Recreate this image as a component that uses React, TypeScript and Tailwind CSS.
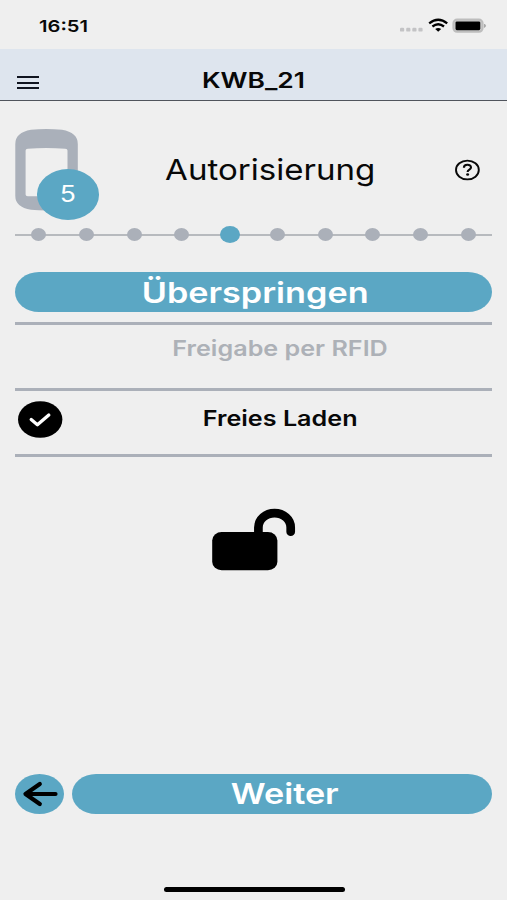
import React from 'react';

const STEPS = 10;
const CURRENT_STEP = 5;

const StatusBar: React.FC = () => (
  <div className="flex h-[49px] items-center justify-between pt-[3px] pl-[39px] pr-[20px]">
    <span className="origin-left scale-x-122 text-[16.5px] font-semibold leading-none">16:51</span>
    <svg width="88" height="16" viewBox="0 0 88 16">
      <g fill="#c3c3c5">
        <rect x="1" y="9.8" width="4.2" height="3.8" rx="1.2" />
        <rect x="7.2" y="9.8" width="4.2" height="3.8" rx="1.2" />
        <rect x="13.3" y="9.8" width="4.2" height="3.8" rx="1.2" />
        <rect x="19.4" y="9.8" width="4.2" height="3.8" rx="1.2" />
      </g>
      <g fill="none" stroke="#000" strokeWidth="2.3">
        <path d="M30.2 5.4 Q39.2 -2 48.2 5.4" />
        <path d="M33.4 8.5 Q39.2 4 45 8.5" />
      </g>
      <path d="M36.2 11.1 Q39.2 8.9 42.2 11.1 L39.2 13.7 Z" fill="#000" />
      <rect x="54.5" y="1.7" width="29" height="12" rx="3.6" fill="#d2d2d2" stroke="#bdbdbd" strokeWidth="2.2" />
      <rect x="56.5" y="3.4" width="24.8" height="8.8" rx="1.4" fill="#000" />
      <path d="M85.6 6.2 Q87.4 7.8 85.6 9.4 Z" fill="#a5a5a5" stroke="#a5a5a5" />
    </svg>
  </div>
);

const Header: React.FC = () => (
  <header className="relative flex h-[52px] items-center justify-center border-b border-[#50545c] bg-[#dee5ee] pt-[13px]">
    <button type="button" aria-label="Menü" className="absolute top-[27px] left-[17px] flex w-[22px] flex-col gap-[3.5px]">
      <span className="h-[2px] bg-[#10141f]" />
      <span className="h-[2px] bg-[#10141f]" />
      <span className="h-[2px] bg-[#10141f]" />
    </button>
    <h1 className="scale-x-124 text-[21.3px] font-semibold leading-none">KWB_21</h1>
  </header>
);

const StepBadge: React.FC = () => (
  <div className="relative h-[91px] w-[84px]">
    <svg width="63" height="82" viewBox="0 0 63 82">
      <path
        fillRule="evenodd"
        fill="#aab0ba"
        d="M16 0.8 Q31 -0.6 47 0.8 Q62.8 3.5 62.8 15 V67 Q62.8 78 47 80.8 Q31 82.2 16 80.8 Q0.3 78 0.3 67 V15 Q0.3 3.5 16 0.8 Z M12.8 19.8 Q10.6 20 10.6 21.6 V65.4 Q10.6 67.2 12.8 67.2 H50.3 Q52.5 67.2 52.5 65.4 V21.6 Q52.5 20 50.3 19.8 Q31 18.4 12.8 19.8 Z"
      />
    </svg>
    <div className="absolute top-[40px] left-[21.5px] flex h-[51px] w-[62.5px] items-center justify-center rounded-[50%] bg-[#5ba7c4]">
      <span className="scale-x-118 text-[22.5px] leading-none text-white">{CURRENT_STEP}</span>
    </div>
  </div>
);

const Progress: React.FC = () => (
  <div className="relative mt-[6px] flex h-[18px] items-center">
    <div className="absolute inset-x-0 top-[8px] h-[2.5px] bg-[#b7babe]" />
    <div className="relative flex w-full">
      {Array.from({ length: STEPS }, (_, i) => (
        <div key={i} className="flex flex-1 items-center justify-center">
          <span
            className={
              i + 1 === CURRENT_STEP
                ? 'h-[17px] w-[20px] rounded-[50%] bg-[#5ba7c4]'
                : 'h-[13px] w-[15px] rounded-[50%] bg-[#abb0b9]'
            }
          />
        </div>
      ))}
    </div>
  </div>
);

const App: React.FC = () => {
  return (
    <div className="flex h-[900px] w-full flex-col overflow-hidden bg-[#efefef] font-['Inter',sans-serif] text-[#080808]">
      <StatusBar />
      <Header />

      <main className="flex flex-1 flex-col px-[15px] pt-[27.5px]">
        <div className="flex">
          <StepBadge />
          <div className="flex h-[82px] flex-1 items-center justify-center">
            <h2 className="scale-x-114 text-[29px] leading-none whitespace-nowrap">Autorisierung</h2>
          </div>
          <div className="flex h-[82px] w-[50px] items-center justify-center">
            <svg width="26" height="22" viewBox="0 0 26 22" fill="none" stroke="#080808">
              <ellipse cx="13.4" cy="11" rx="11.4" ry="9.4" strokeWidth="1.9" />
              <path d="M9.9 8.7 C9.9 4.9 17 4.9 17 8.5 C17 10.7 13.6 10.5 13.6 12.9" strokeWidth="2.1" />
              <ellipse cx="13.6" cy="15.5" rx="1.5" ry="1.2" fill="#080808" stroke="none" />
            </svg>
          </div>
        </div>

        <Progress />

        <button type="button" className="mt-[28px] flex h-[40px] shrink-0 items-center justify-center rounded-[24px/20px] bg-[#5ba7c4] pt-px pl-[4px]">
          <span className="scale-x-118 text-[29px] font-semibold leading-none text-white">Überspringen</span>
        </button>

        <div className="mt-[10px] border-t-3 border-[#abb0b9]">
          <div className="flex h-[63px] pl-[54px]">
            <div className="flex h-[49px] flex-1 items-center justify-center">
              <span className="scale-x-117 text-[21.5px] font-semibold leading-none text-[#adb1b7]">Freigabe per RFID</span>
            </div>
          </div>
          <div className="flex h-[69px] border-y-3 border-[#abb0b9]">
            <div className="flex h-[57px] w-[54px] items-center pl-[3px]">
              <svg width="45" height="37" viewBox="0 0 45 37">
                <ellipse cx="22.2" cy="18.5" rx="22.2" ry="18.3" fill="#000" />
                <path d="M13.2 18.6 L19.4 23.8 L30.8 14" fill="none" stroke="#fff" strokeWidth="3.3" strokeLinecap="round" strokeLinejoin="round" />
              </svg>
            </div>
            <div className="flex h-[57px] flex-1 items-center justify-center">
              <span className="scale-x-117 text-[21.5px] font-semibold leading-none">Freies Laden</span>
            </div>
          </div>
        </div>

        <svg className="mt-[51px] ml-[196px]" width="86" height="63" viewBox="0 0 86 63">
          <rect x="1.2" y="24" width="65.2" height="38.2" rx="9.5" ry="8.5" />
          <path d="M47.4 28 V19.5 A16.1 14.3 0 0 1 79.7 19.5 V23.7" fill="none" stroke="#000" strokeWidth="8.7" strokeLinecap="round" />
        </svg>

        <div className="mt-auto mb-[86.5px] flex h-[40px] shrink-0 gap-[7.5px]">
          <button type="button" aria-label="Zurück" className="flex h-[40px] w-[49px] shrink-0 items-center justify-center rounded-[50%] bg-[#5ba7c4]">
            <svg width="36" height="26" viewBox="0 0 36 26" fill="none" stroke="#000" strokeWidth="4.2" strokeLinecap="round" strokeLinejoin="round">
              <path d="M33.5 13 H3.5 M17.8 3 L3.5 13 L17.8 23" />
            </svg>
          </button>
          <button type="button" className="flex h-[40px] flex-1 items-center justify-center rounded-[24px/20px] bg-[#5ba7c4] pl-[6px]">
            <span className="scale-x-118 text-[29px] font-semibold leading-none text-white">Weiter</span>
          </button>
        </div>
      </main>

      <div className="absolute top-[886.5px] left-[163.5px] h-[5.5px] w-[181px] rounded-full bg-black" />
    </div>
  );
};

export default App;
